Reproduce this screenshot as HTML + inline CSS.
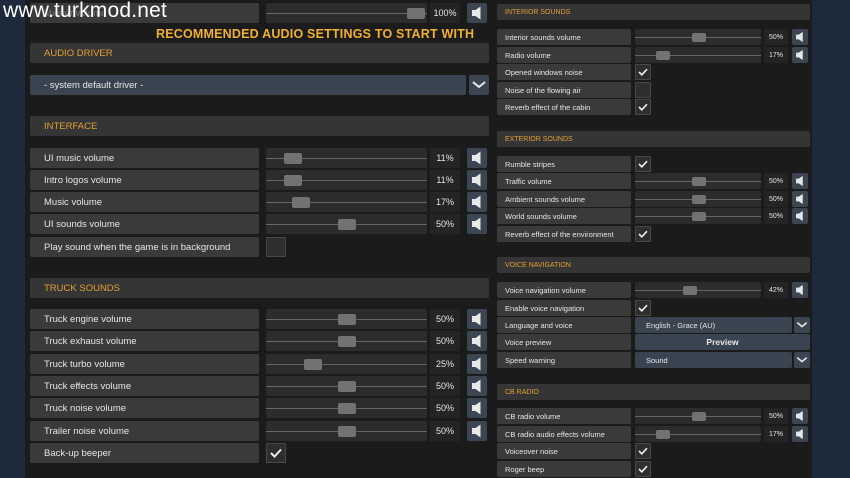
<!DOCTYPE html>
<html><head><meta charset="utf-8">
<style>
*{margin:0;padding:0;box-sizing:border-box}
body{width:850px;height:478px;overflow:hidden;background:#1c2a3b;font-family:"Liberation Sans",sans-serif;position:relative}
.a{position:absolute}
#lp{left:25px;top:0;width:467px;height:478px;background:#1b1b1c}
#rp{left:492px;top:0;width:320px;height:478px;background:#1b1b1c}
.l{position:absolute;background:#3a3a3a;color:#e6e6e6;border-radius:2px;white-space:nowrap}
.L{left:30px;width:229px;height:20px;font-size:9.5px;line-height:22px;padding-left:14px}
.R{left:497px;width:134px;height:16px;font-size:7.5px;line-height:17px;padding-left:8px}
.h{position:absolute;background:#353535;color:#e3a035;border-radius:2px}
.HL{left:30px;width:459px;height:20px;font-size:9.5px;line-height:22px;padding-left:14px}
.HR{left:497px;width:313px;height:16px;font-size:7px;line-height:17px;padding-left:8px}
.s{position:absolute;background:#2c2c2c;border-radius:2px}
.s:before{content:"";position:absolute;left:0;right:0;top:50%;height:1px;background:#666}
.SL{left:266px;width:161px;height:20px}
.SR{left:635px;width:126px;height:16px}
.k{position:absolute;background:#727272;border-radius:2px}
.SL .k{width:18px;height:11px;top:5px}
.SR .k{width:14px;height:9px;top:4px}
.p{position:absolute;background:#242424;color:#e6e6e6;text-align:center}
.PL{left:430px;width:30px;height:20px;font-size:9px;line-height:21px}
.PR{left:764px;width:24px;height:16px;font-size:7px;line-height:17px}
.b{position:absolute;background:#3c4653;border-radius:2px}
.BL{left:467px;width:20px;height:20px}
.BR{left:792px;width:16px;height:16px}
.b svg{position:absolute;left:50%;top:50%;transform:translate(-50%,-50%)}
.BL svg{width:10px;height:14px}
.BR.sp svg{width:8px;height:11px}
.c{position:absolute;background:#2e2e2e;border:1px solid #484848;border-radius:1px}
.CL{left:266px;width:20px;height:20px}
.CR{left:635px;width:16px;height:16px}
.c svg{position:absolute;left:50%;top:50%;transform:translate(-50%,-50%)}
.d{position:absolute;background:#3a4450;color:#e6e6e6;border-radius:2px}
</style></head><body>
<div class="a" id="lp"></div>
<div class="a" id="rp"></div>

<div class="l L" style="top:3px;color:#777">Master volume</div>
<div class="s SL" style="top:3px"><div class="k" style="left:141px"></div></div>
<div class="p PL" style="top:3px">100%</div>
<div class="b BL" style="top:3px"><svg viewBox="0 0 10 14"><path d="M0 4h3.5l5-3.5v13L3.5 10H0z" fill="#e8e8e8"/></svg></div>
<div class="a" style="left:3px;top:-1px;font-size:21px;color:#fff;letter-spacing:0.2px">www.turkmod.net</div>
<div class="a" style="left:156px;top:27px;font-size:12.5px;font-weight:bold;color:#f0b030;letter-spacing:0.2px">RECOMMENDED AUDIO SETTINGS TO START WITH</div>

<div class="h HL" style="top:43px">AUDIO DRIVER</div>
<div class="d" style="left:30px;top:75px;width:436px;height:20px;font-size:9.5px;line-height:21px;padding-left:14px">- system default driver -</div>
<div class="b" style="left:469px;top:75px;width:20px;height:20px"><svg width="14" height="8" viewBox="0 0 14 8"><path d="M1 1l6 5 6-5" stroke="#e8e8e8" stroke-width="2" fill="none"/></svg></div>

<div class="h HL" style="top:116px">INTERFACE</div>

<div class="l L" style="top:148px">UI music volume</div>
<div class="s SL" style="top:148px"><div class="k" style="left:18px"></div></div>
<div class="p PL" style="top:148px">11%</div>
<div class="b BL" style="top:148px"><svg viewBox="0 0 10 14"><path d="M0 4h3.5l5-3.5v13L3.5 10H0z" fill="#e8e8e8"/></svg></div>

<div class="l L" style="top:170px">Intro logos volume</div>
<div class="s SL" style="top:170px"><div class="k" style="left:18px"></div></div>
<div class="p PL" style="top:170px">11%</div>
<div class="b BL" style="top:170px"><svg viewBox="0 0 10 14"><path d="M0 4h3.5l5-3.5v13L3.5 10H0z" fill="#e8e8e8"/></svg></div>

<div class="l L" style="top:192px">Music volume</div>
<div class="s SL" style="top:192px"><div class="k" style="left:26px"></div></div>
<div class="p PL" style="top:192px">17%</div>
<div class="b BL" style="top:192px"><svg viewBox="0 0 10 14"><path d="M0 4h3.5l5-3.5v13L3.5 10H0z" fill="#e8e8e8"/></svg></div>

<div class="l L" style="top:214px">UI sounds volume</div>
<div class="s SL" style="top:214px"><div class="k" style="left:72px"></div></div>
<div class="p PL" style="top:214px">50%</div>
<div class="b BL" style="top:214px"><svg viewBox="0 0 10 14"><path d="M0 4h3.5l5-3.5v13L3.5 10H0z" fill="#e8e8e8"/></svg></div>

<div class="l L" style="top:237px">Play sound when the game is in background</div>
<div class="c CL" style="top:237px"></div>

<div class="h HL" style="top:278px">TRUCK SOUNDS</div>

<div class="l L" style="top:309px">Truck engine volume</div>
<div class="s SL" style="top:309px"><div class="k" style="left:72px"></div></div>
<div class="p PL" style="top:309px">50%</div>
<div class="b BL" style="top:309px"><svg viewBox="0 0 10 14"><path d="M0 4h3.5l5-3.5v13L3.5 10H0z" fill="#e8e8e8"/></svg></div>

<div class="l L" style="top:331px">Truck exhaust volume</div>
<div class="s SL" style="top:331px"><div class="k" style="left:72px"></div></div>
<div class="p PL" style="top:331px">50%</div>
<div class="b BL" style="top:331px"><svg viewBox="0 0 10 14"><path d="M0 4h3.5l5-3.5v13L3.5 10H0z" fill="#e8e8e8"/></svg></div>

<div class="l L" style="top:354px">Truck turbo volume</div>
<div class="s SL" style="top:354px"><div class="k" style="left:38px"></div></div>
<div class="p PL" style="top:354px">25%</div>
<div class="b BL" style="top:354px"><svg viewBox="0 0 10 14"><path d="M0 4h3.5l5-3.5v13L3.5 10H0z" fill="#e8e8e8"/></svg></div>

<div class="l L" style="top:376px">Truck effects volume</div>
<div class="s SL" style="top:376px"><div class="k" style="left:72px"></div></div>
<div class="p PL" style="top:376px">50%</div>
<div class="b BL" style="top:376px"><svg viewBox="0 0 10 14"><path d="M0 4h3.5l5-3.5v13L3.5 10H0z" fill="#e8e8e8"/></svg></div>

<div class="l L" style="top:398px">Truck noise volume</div>
<div class="s SL" style="top:398px"><div class="k" style="left:72px"></div></div>
<div class="p PL" style="top:398px">50%</div>
<div class="b BL" style="top:398px"><svg viewBox="0 0 10 14"><path d="M0 4h3.5l5-3.5v13L3.5 10H0z" fill="#e8e8e8"/></svg></div>

<div class="l L" style="top:421px">Trailer noise volume</div>
<div class="s SL" style="top:421px"><div class="k" style="left:72px"></div></div>
<div class="p PL" style="top:421px">50%</div>
<div class="b BL" style="top:421px"><svg viewBox="0 0 10 14"><path d="M0 4h3.5l5-3.5v13L3.5 10H0z" fill="#e8e8e8"/></svg></div>

<div class="l L" style="top:443px">Back-up beeper</div>
<div class="c CL" style="top:443px"><svg width="12" height="10" viewBox="0 0 12 10"><path d="M1 5l3.5 3.5L11 1.5" stroke="#eee" stroke-width="2" fill="none"/></svg></div>

<!-- RIGHT -->
<div class="h HR" style="top:4px">INTERIOR SOUNDS</div>
<div class="l R" style="top:29px">Interior sounds volume</div>
<div class="s SR" style="top:29px"><div class="k" style="left:57px"></div></div>
<div class="p PR" style="top:29px">50%</div>
<div class="b BR sp" style="top:29px"><svg viewBox="0 0 10 14"><path d="M0 4h3.5l5-3.5v13L3.5 10H0z" fill="#e8e8e8"/></svg></div>

<div class="l R" style="top:47px">Radio volume</div>
<div class="s SR" style="top:47px"><div class="k" style="left:21px"></div></div>
<div class="p PR" style="top:47px">17%</div>
<div class="b BR sp" style="top:47px"><svg viewBox="0 0 10 14"><path d="M0 4h3.5l5-3.5v13L3.5 10H0z" fill="#e8e8e8"/></svg></div>

<div class="l R" style="top:64px">Opened windows noise</div>
<div class="c CR" style="top:64px"><svg width="10" height="8" viewBox="0 0 12 10"><path d="M1 5l3.5 3.5L11 1.5" stroke="#eee" stroke-width="2" fill="none"/></svg></div>
<div class="l R" style="top:82px">Noise of the flowing air</div>
<div class="c CR" style="top:82px"></div>
<div class="l R" style="top:99px">Reverb effect of the cabin</div>
<div class="c CR" style="top:99px"><svg width="10" height="8" viewBox="0 0 12 10"><path d="M1 5l3.5 3.5L11 1.5" stroke="#eee" stroke-width="2" fill="none"/></svg></div>

<div class="h HR" style="top:131px">EXTERIOR SOUNDS</div>
<div class="l R" style="top:156px">Rumble stripes</div>
<div class="c CR" style="top:156px"><svg width="10" height="8" viewBox="0 0 12 10"><path d="M1 5l3.5 3.5L11 1.5" stroke="#eee" stroke-width="2" fill="none"/></svg></div>

<div class="l R" style="top:173px">Traffic volume</div>
<div class="s SR" style="top:173px"><div class="k" style="left:57px"></div></div>
<div class="p PR" style="top:173px">50%</div>
<div class="b BR sp" style="top:173px"><svg viewBox="0 0 10 14"><path d="M0 4h3.5l5-3.5v13L3.5 10H0z" fill="#e8e8e8"/></svg></div>

<div class="l R" style="top:191px">Ambient sounds volume</div>
<div class="s SR" style="top:191px"><div class="k" style="left:57px"></div></div>
<div class="p PR" style="top:191px">50%</div>
<div class="b BR sp" style="top:191px"><svg viewBox="0 0 10 14"><path d="M0 4h3.5l5-3.5v13L3.5 10H0z" fill="#e8e8e8"/></svg></div>

<div class="l R" style="top:208px">World sounds volume</div>
<div class="s SR" style="top:208px"><div class="k" style="left:57px"></div></div>
<div class="p PR" style="top:208px">50%</div>
<div class="b BR sp" style="top:208px"><svg viewBox="0 0 10 14"><path d="M0 4h3.5l5-3.5v13L3.5 10H0z" fill="#e8e8e8"/></svg></div>

<div class="l R" style="top:226px">Reverb effect of the environment</div>
<div class="c CR" style="top:226px"><svg width="10" height="8" viewBox="0 0 12 10"><path d="M1 5l3.5 3.5L11 1.5" stroke="#eee" stroke-width="2" fill="none"/></svg></div>

<div class="h HR" style="top:257px">VOICE NAVIGATION</div>
<div class="l R" style="top:282px">Voice navigation volume</div>
<div class="s SR" style="top:282px"><div class="k" style="left:48px"></div></div>
<div class="p PR" style="top:282px">42%</div>
<div class="b BR sp" style="top:282px"><svg viewBox="0 0 10 14"><path d="M0 4h3.5l5-3.5v13L3.5 10H0z" fill="#e8e8e8"/></svg></div>

<div class="l R" style="top:300px">Enable voice navigation</div>
<div class="c CR" style="top:300px"><svg width="10" height="8" viewBox="0 0 12 10"><path d="M1 5l3.5 3.5L11 1.5" stroke="#eee" stroke-width="2" fill="none"/></svg></div>

<div class="l R" style="top:317px">Language and voice</div>
<div class="d" style="left:635px;top:317px;width:157px;height:16px;font-size:7.5px;line-height:17px;padding-left:11px">English - Grace (AU)</div>
<div class="b BR" style="top:317px;left:794px"><svg width="11" height="7" viewBox="0 0 14 8"><path d="M1 1l6 5 6-5" stroke="#e8e8e8" stroke-width="2" fill="none"/></svg></div>

<div class="l R" style="top:334px">Voice preview</div>
<div class="d" style="left:635px;top:334px;width:175px;height:16px;font-size:8.5px;line-height:17px;text-align:center;font-weight:bold">Preview</div>

<div class="l R" style="top:352px">Speed warning</div>
<div class="d" style="left:635px;top:352px;width:157px;height:16px;font-size:7.5px;line-height:17px;padding-left:11px">Sound</div>
<div class="b BR" style="top:352px;left:794px"><svg width="11" height="7" viewBox="0 0 14 8"><path d="M1 1l6 5 6-5" stroke="#e8e8e8" stroke-width="2" fill="none"/></svg></div>

<div class="h HR" style="top:384px">CB RADIO</div>
<div class="l R" style="top:408px">CB radio volume</div>
<div class="s SR" style="top:408px"><div class="k" style="left:57px"></div></div>
<div class="p PR" style="top:408px">50%</div>
<div class="b BR sp" style="top:408px"><svg viewBox="0 0 10 14"><path d="M0 4h3.5l5-3.5v13L3.5 10H0z" fill="#e8e8e8"/></svg></div>

<div class="l R" style="top:426px">CB radio audio effects volume</div>
<div class="s SR" style="top:426px"><div class="k" style="left:21px"></div></div>
<div class="p PR" style="top:426px">17%</div>
<div class="b BR sp" style="top:426px"><svg viewBox="0 0 10 14"><path d="M0 4h3.5l5-3.5v13L3.5 10H0z" fill="#e8e8e8"/></svg></div>

<div class="l R" style="top:443px">Voiceover noise</div>
<div class="c CR" style="top:443px"><svg width="10" height="8" viewBox="0 0 12 10"><path d="M1 5l3.5 3.5L11 1.5" stroke="#eee" stroke-width="2" fill="none"/></svg></div>
<div class="l R" style="top:461px">Roger beep</div>
<div class="c CR" style="top:461px"><svg width="10" height="8" viewBox="0 0 12 10"><path d="M1 5l3.5 3.5L11 1.5" stroke="#eee" stroke-width="2" fill="none"/></svg></div>
</body></html>
